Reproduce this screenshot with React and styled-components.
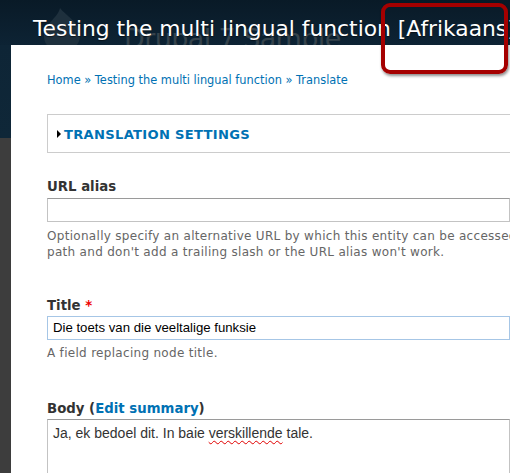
import React from "react";
import styled, { createGlobalStyle } from "styled-components";

const Global = createGlobalStyle`
  html, body { margin: 0; padding: 0; }
  body { width: 510px; height: 473px; overflow: hidden; background: #0d2232; }
`;

const Page = styled.div`
  position: relative;
  width: 510px;
  height: 473px;
  overflow: hidden;
  display: flex;
  flex-direction: column;
  font-family: "DejaVu Sans", Verdana, sans-serif;
`;

const Header = styled.header`
  position: relative;
  height: 45px;
  flex: none;
  background: linear-gradient(180deg, #091a27 0%, #0d2334 100%);
  overflow: hidden;
`;

const SiteName = styled.div`
  position: absolute;
  left: 124px;
  top: 23px;
  font-family: "DejaVu Sans", sans-serif;
  font-size: 27px;
  color: #35434c;
  white-space: nowrap;
  letter-spacing: -0.6px;
`;

const Logo = styled.svg`
  position: absolute;
  left: 40px;
  top: 6px;
`;

const PageTitle = styled.h1`
  position: relative;
  margin: 0;
  padding: 15px 0 0 33px;
  font-family: "DejaVu Sans", sans-serif;
  font-weight: normal;
  font-size: 21.8px;
  line-height: 28px;
  color: #ffffff;
  white-space: nowrap;
  text-shadow: 0 1px 1px rgba(0,0,0,0.5);
`;

const Row = styled.div`
  flex: 1;
  display: flex;
  min-height: 0;
`;

const Side = styled.div`
  width: 11px;
  flex: none;
  background: linear-gradient(180deg, #0e2536 0, #0f2738 93px, #3d3d3d 93px);
`;

const Main = styled.main`
  flex: 1;
  background: #ffffff;
  padding: 27px 0 0 36px;
  overflow: hidden;
`;

const Breadcrumb = styled.div`
  font-size: 11.4px;
  line-height: 16px;
  color: #0071b3;
  white-space: nowrap;
`;

const Fieldset = styled.div`
  margin-top: 26px;
  width: 480px;
  height: 39px;
  border: 1px solid #cccccc;
  display: flex;
  align-items: center;
  padding-left: 9px;
  box-sizing: border-box;
`;

const Legend = styled.span`
  display: flex;
  align-items: center;
  gap: 3px;
  font-size: 13.1px;
  font-weight: bold;
  color: #0071b3;
  letter-spacing: 0.3px;
  margin-top: 1px;
`;

const Triangle = styled.span`
  width: 0;
  height: 0;
  border-top: 4px solid transparent;
  border-bottom: 4px solid transparent;
  border-left: 4px solid #000;
`;

const Field = styled.div`
  margin-top: ${(p) => p.$mt}px;
`;

const Label = styled.div`
  font-size: 13.3px;
  font-weight: bold;
  color: #333333;
  line-height: 16px;
  margin-bottom: ${(p) => p.$mb ?? 2}px;
  white-space: nowrap;
`;

const Req = styled.span`
  color: #ee0000;
`;

const Link = styled.span`
  color: #0071b3;
`;

const Input = styled.div`
  width: 463px;
  height: 24px;
  box-sizing: border-box;
  border: 1px solid ${(p) => (p.$focus ? "#a6c6e6" : "#c3c3c3")};
  border-top-color: ${(p) => (p.$focus ? "#a6c6e6" : "#9a9a9a")};
  font-family: "Liberation Sans", Arial, sans-serif;
  font-size: 13.2px;
  line-height: 22px;
  padding-left: 5px;
  color: #000;
  white-space: nowrap;
`;

const TextArea = styled.div`
  width: 463px;
  height: 80px;
  box-sizing: border-box;
  border: 1px solid #c3c3c3;
  border-top-color: #9a9a9a;
  font-family: "Liberation Sans", Arial, sans-serif;
  font-size: 14px;
  line-height: 16px;
  padding: 5px 5px;
  color: #333;
  white-space: nowrap;
`;

const Squiggle = styled.span`
  text-decoration: underline wavy #e00000;
  text-decoration-thickness: 1px;
  text-underline-offset: 2px;
`;

const Desc = styled.div`
  margin-top: ${(p) => p.$mt}px;
  font-size: 12px;
  letter-spacing: 0.3px;
  line-height: 16px;
  color: #666666;
  white-space: nowrap;
`;

const Highlight = styled.div`
  position: absolute;
  left: 381px;
  top: 3px;
  width: 127px;
  height: 71px;
  box-sizing: border-box;
  border: 4px solid #a50000;
  border-radius: 9px;
  box-shadow: 1px 2px 3px rgba(0,0,0,0.45);
`;

export default function App() {
  return (
    <>
      <Global />
      <Page>
        <Header>
          <Logo width="50" height="44" viewBox="0 0 50 44">
            <path d="M20 2 C26 10 40 16 40 30 C40 40 30 46 22 46 C12 46 4 40 4 30 C4 18 18 12 20 2 Z" fill="#1e303d" />
          </Logo>
          <SiteName>Drupal 7 Sample</SiteName>
          <PageTitle>Testing the multi lingual function [Afrikaans]</PageTitle>
        </Header>
        <Row>
          <Side />
          <Main>
            <Breadcrumb>Home » Testing the multi lingual function » Translate</Breadcrumb>
            <Fieldset>
              <Legend><Triangle />TRANSLATION SETTINGS</Legend>
            </Fieldset>
            <Field $mt={26}>
              <Label $mb={3}>URL alias</Label>
              <Input />
              <Desc $mt={6}>
                Optionally specify an alternative URL by which this entity can be accessed. For example, type "about" when writing an about page. Use a relative
                <br />
                path and don't add a trailing slash or the URL alias won't work.
              </Desc>
            </Field>
            <Field $mt={38}>
              <Label>Title <Req>*</Req></Label>
              <Input $focus>Die toets van die veeltalige funksie</Input>
              <Desc $mt={5}>A field replacing node title.</Desc>
            </Field>
            <Field $mt={40}>
              <Label>Body (<Link>Edit summary</Link>)</Label>
              <TextArea>Ja, ek bedoel dit. In baie <Squiggle>verskillende</Squiggle> tale.</TextArea>
            </Field>
          </Main>
        </Row>
        <Highlight />
      </Page>
    </>
  );
}
